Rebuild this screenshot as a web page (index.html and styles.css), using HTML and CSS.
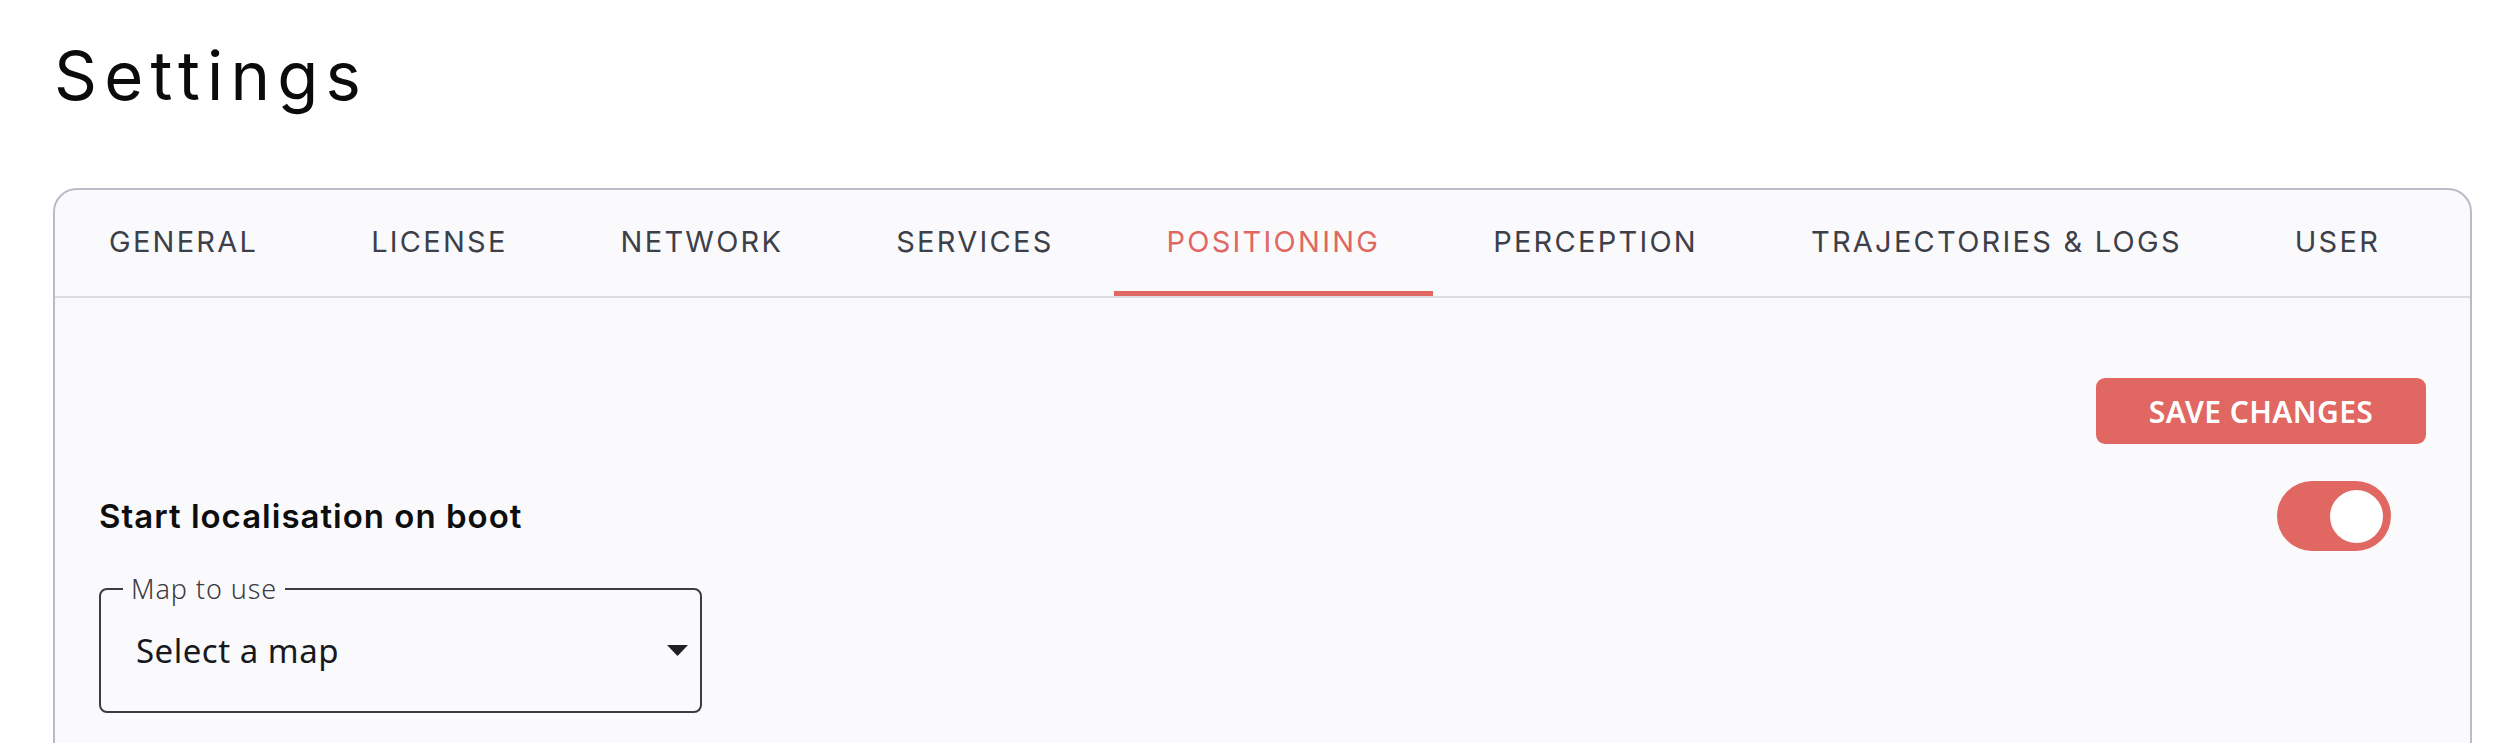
FILE: index.html
```html
<!DOCTYPE html>
<html lang="en">
<head>
<meta charset="utf-8">
<title>Settings</title>
<link rel="stylesheet" href="styles.css">
</head>
<body>
<main class="page">
  <h1 class="page-title">Settings</h1>

  <section class="card">
    <nav class="tabs">
      <a class="tab">GENERAL</a>
      <a class="tab">LICENSE</a>
      <a class="tab">NETWORK</a>
      <a class="tab">SERVICES</a>
      <a class="tab tab-active">POSITIONING</a>
      <a class="tab">PERCEPTION</a>
      <a class="tab">TRAJECTORIES &amp; LOGS</a>
      <a class="tab">USER</a>
    </nav>

    <div class="panel">
      <div class="actions">
        <button class="btn-save" type="button">SAVE CHANGES</button>
      </div>

      <div class="setting-row">
        <h2 class="setting-label">Start localisation on boot</h2>
        <span class="switch switch-on" role="switch" aria-checked="true"><span class="switch-knob"></span></span>
      </div>

      <fieldset class="select-field">
        <legend class="select-legend">Map to use</legend>
        <div class="select-body">
          <span class="select-value">Select a map</span>
          <svg class="select-arrow" width="21" height="11" viewBox="0 0 21 11" aria-hidden="true">
            <path d="M0 0 L21 0 L10.5 11 Z" fill="#1f2023"/>
          </svg>
        </div>
      </fieldset>
    </div>
  </section>
</main>
</body>
</html>
```

FILE: styles.css
```css
html, body {
  margin: 0;
  background: #ffffff;
}

.page {
  padding: 0 47px 0 53px;
  font-family: "Inter", "Open Sans", sans-serif;
  color: #111111;
}

.page-title {
  margin: 42px 0 79px 1px;
  font-size: 67px;
  line-height: 67px;
  font-weight: 400;
  letter-spacing: 7.2px;
  color: #0b0b0b;
}

.card {
  border: 2px solid #b9bbc7;
  border-radius: 24px;
  background: #fafafd;
  min-height: 700px;
}

/* tab strip */
.tabs {
  display: flex;
  gap: 7px;
  height: 106px;
  border-bottom: 2px solid #dcdce1;
}

.tab {
  position: relative;
  display: flex;
  align-items: center;
  box-sizing: border-box;
  padding: 0 53px 4px 53px;
  font-size: 29px;
  letter-spacing: 2.25px;
  color: #3d4049;
  white-space: nowrap;
  cursor: pointer;
}

.tab:first-child {
  padding-left: 54px;
}

.tab-active {
  color: #e06862;
}

.tab-active::after {
  content: "";
  position: absolute;
  left: 0;
  right: 0;
  bottom: 0;
  height: 5px;
  background: #e06862;
}

/* panel body */
.panel {
  padding: 80px 44px 0 44px;
}

.actions {
  display: flex;
  justify-content: flex-end;
}

.btn-save {
  width: 330px;
  height: 66px;
  border: none;
  border-radius: 9px;
  background: #e16862;
  color: #ffffff;
  font-family: "Noto Sans", "Open Sans", sans-serif;
  font-size: 30px;
  font-weight: 600;
  letter-spacing: 0.4px;
  cursor: pointer;
}

.setting-row {
  display: flex;
  align-items: center;
  justify-content: space-between;
  margin-top: 37px;
  height: 70px;
}

.setting-label {
  margin: 0;
  font-size: 33px;
  font-weight: 600;
  letter-spacing: 1px;
  color: #0e0e0e;
}

.switch {
  display: flex;
  justify-content: flex-end;
  align-items: center;
  box-sizing: border-box;
  width: 114px;
  height: 70px;
  margin-right: 35px;
  padding: 0 8px;
  border-radius: 35px;
  background: #e16862;
}

.switch-knob {
  width: 53px;
  height: 53px;
  border-radius: 50%;
  background: #ffffff;
}

/* outlined select */
.select-field {
  box-sizing: border-box;
  width: 603px;
  margin: 24px 0 0 0;
  padding: 0 12px 0 35px;
  min-width: 0;
  border: 2px solid #3b3d42;
  border-radius: 8px;
  font-family: "Noto Sans", "Open Sans", sans-serif;
}

.select-legend {
  margin-left: -13px;
  padding: 0 8px;
  font-size: 27px;
  line-height: 28px;
  font-weight: 300;
  letter-spacing: 0.9px;
  color: #3a3c41;
}

.select-body {
  display: flex;
  align-items: center;
  justify-content: space-between;
  height: 94px;
  padding-bottom: 14px;
}

.select-value {
  font-size: 33px;
  letter-spacing: 0.5px;
  color: #18191c;
}

.select-arrow {
  display: block;
}
```
